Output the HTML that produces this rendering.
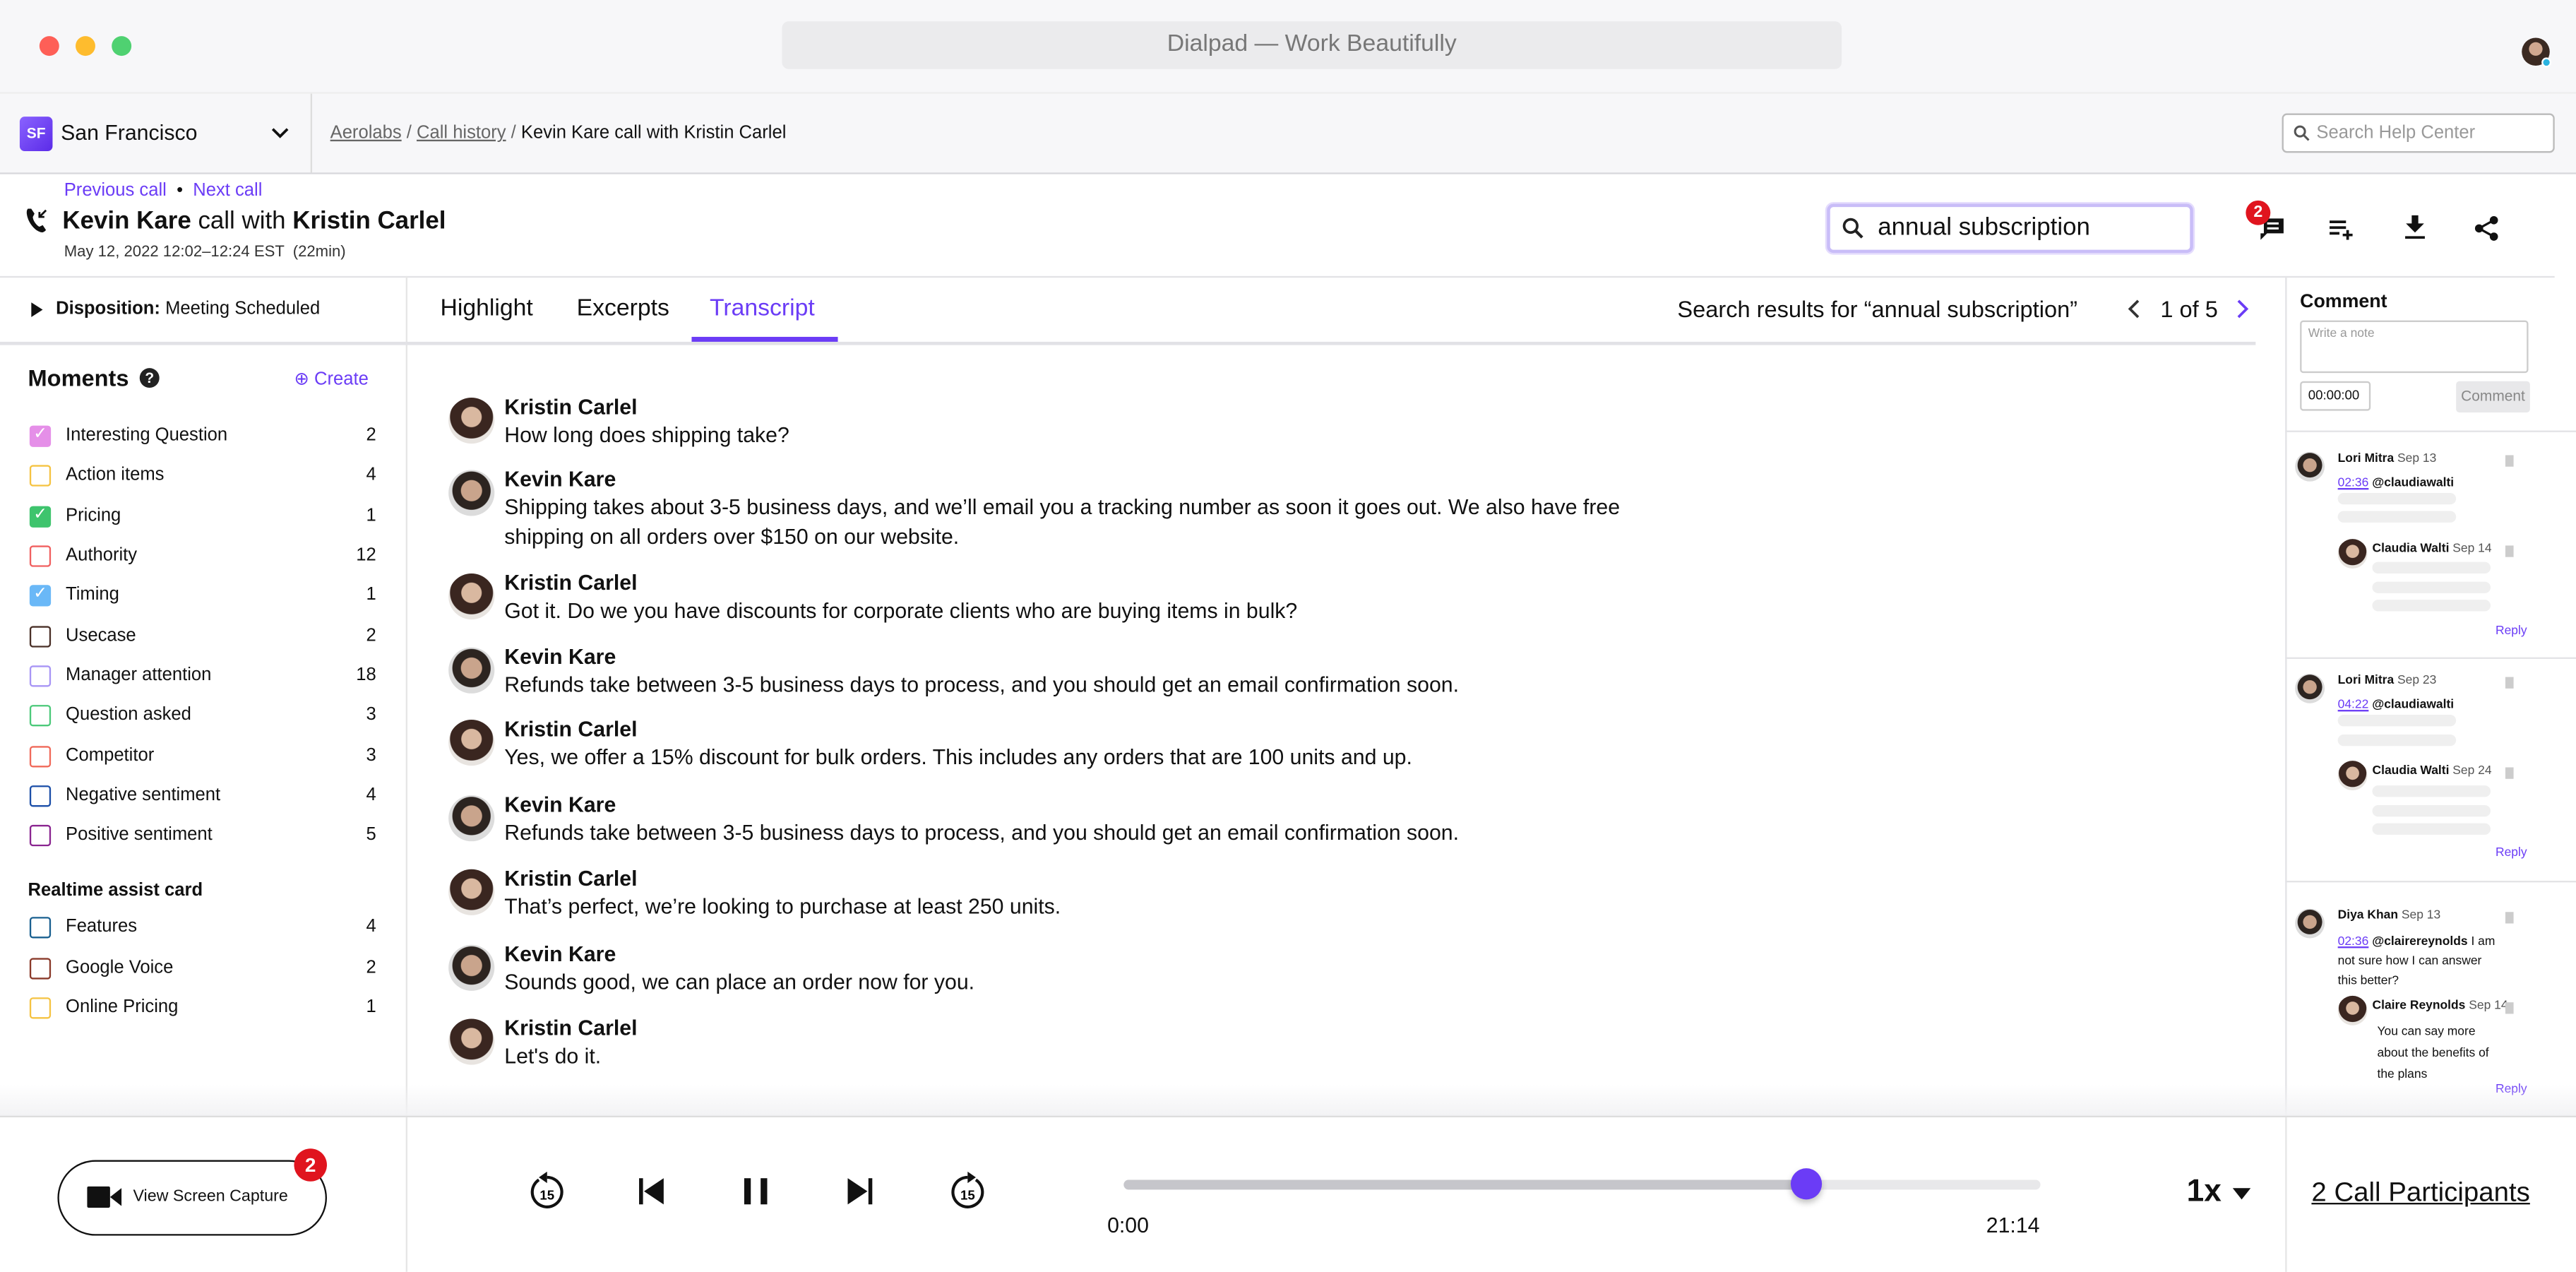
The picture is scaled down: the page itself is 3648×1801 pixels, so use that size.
<!DOCTYPE html>
<html><head><meta charset="utf-8"><style>
*{box-sizing:border-box;margin:0;padding:0}
html,body{width:3648px;height:1800px;overflow:hidden;background:#fff}
#s{position:absolute;left:0;top:0;width:1568px;height:774px;transform:scale(2.32653);transform-origin:0 0;font-family:"Liberation Sans",sans-serif;color:#111;background:#fff}
.a{position:absolute;white-space:nowrap}
.p{color:#6b3cf6}
.chk{position:absolute;left:18px;width:13px;height:13px;border:1.5px solid;border-radius:2px;color:#fff;font-size:10px;line-height:10px;text-align:center}
.mi{position:absolute;left:40px;font-size:11px}
.mn{position:absolute;left:189px;width:40px;font-size:11px;text-align:right}
.av{position:absolute;width:28px;height:28px;border-radius:50%}
.f{background:radial-gradient(circle at 50% 42%,#d9b8a0 0 28%,#3a2620 30% 60%,#e8e4e0 62%)}
.m{background:radial-gradient(circle at 50% 45%,#c9a48c 0 30%,#2c2420 32% 55%,#dcdcdc 57%)}
.nm{position:absolute;left:307px;font-size:13px;font-weight:bold}
.tx{position:absolute;left:307px;font-size:13px;line-height:17.5px}
.sk{position:absolute;height:7px;border-radius:4px;background:#efefef}
.cs{font-size:7.5px}
</style></head><body><div id="s">
<div class="a" style="left:0;top:0;width:1568px;height:105px;background:#f7f7f9"></div>
<div class="a" style="left:24px;top:22px;width:12px;height:12px;border-radius:50%;background:#fe5f57"></div>
<div class="a" style="left:46px;top:22px;width:12px;height:12px;border-radius:50%;background:#febc2e"></div>
<div class="a" style="left:68px;top:22px;width:12px;height:12px;border-radius:50%;background:#4fd171"></div>
<div class="a" style="left:476px;top:13px;width:645px;height:29px;border-radius:4px;background:#ebebed;text-align:center;line-height:29px;font-size:14.5px;color:#777">Dialpad — Work Beautifully</div>
<div class="a" style="left:1535px;top:23px;width:17px;height:17px;border-radius:50%;background:radial-gradient(circle at 50% 40%,#d0a890 0 30%,#3b2a22 32%)"></div>
<div class="a" style="left:1547px;top:35px;width:6px;height:6px;border-radius:50%;background:#2bb3e0;border:1px solid #fff"></div>
<div class="a" style="left:0;top:56px;width:1568px;height:1px;background:#eee"></div>
<div class="a" style="left:12px;top:71px;width:20px;height:21px;border-radius:3px;background:linear-gradient(135deg,#8a63ff,#5b2be8);color:#fff;font-size:9px;font-weight:bold;text-align:center;line-height:21px">SF</div>
<div class="a" style="left:37px;top:73px;font-size:13px">San Francisco</div>
<svg class="a" style="left:165px;top:77px" width="11" height="8" viewBox="0 0 11 8"><path d="M1 1.5l4.5 4.5 4.5-4.5" stroke="#111" stroke-width="1.6" fill="none"/></svg>
<div class="a" style="left:189px;top:57px;width:1px;height:48px;background:#ddd"></div>
<div class="a" style="left:201px;top:75px;font-size:11px;color:#666"><u>Aerolabs</u> / <u>Call history</u> / <span style="color:#111">Kevin Kare call with Kristin Carlel</span></div>
<div class="a" style="left:1389px;top:69px;width:166px;height:24px;border:1px solid #bbb;border-radius:3px;background:#fff"></div>
<svg class="a" style="left:1396px;top:76px" width="10" height="10" viewBox="0 0 10 10"><circle cx="4" cy="4" r="3" stroke="#555" stroke-width="1.3" fill="none"/><path d="M6.3 6.3l3 3" stroke="#555" stroke-width="1.3"/></svg>
<div class="a" style="left:1410px;top:75px;font-size:11px;color:#999">Search Help Center</div>
<div class="a" style="left:0;top:105px;width:1568px;height:1px;background:#d8d8dc"></div>
<div class="a p" style="left:39px;top:110px;font-size:11px">Previous call &nbsp;<span style="color:#111">•</span>&nbsp; Next call</div>
<svg class="a" style="left:15px;top:126px" width="15" height="16" viewBox="0 0 15 16"><path d="M2 1c-1 1-1 3 0 6s4 7 7 8c2 1 3 0 4-1l-2-3-2 1c-2-1-4-4-4-6l1-2-2-3z" fill="#111"/><path d="M13 2l-4 4M9 3v3h3" stroke="#111" stroke-width="1.2" fill="none"/></svg>
<div class="a" style="left:38px;top:126px;font-size:15px"><b>Kevin Kare</b> call with <b>Kristin Carlel</b></div>
<div class="a" style="left:39px;top:148px;font-size:9.5px;color:#333">May 12, 2022 12:02–12:24 EST &nbsp;(22min)</div>
<div class="a" style="left:1112px;top:124px;width:223px;height:30px;border:2px solid #c9bdf8;border-radius:4px;box-shadow:0 0 0 1px #e4dcfd"></div>
<svg class="a" style="left:1121px;top:132px" width="14" height="14" viewBox="0 0 14 14"><circle cx="5.5" cy="5.5" r="4" stroke="#222" stroke-width="1.6" fill="none"/><path d="M8.5 8.5l4 4" stroke="#222" stroke-width="1.8"/></svg>
<div class="a" style="left:1143px;top:130px;font-size:15px">annual subscription</div>
<svg class="a" style="left:1374px;top:130px" width="18" height="18" viewBox="0 0 18 18"><path d="M4 3h12v9H6l-4 4V12H4z" fill="#111"/><path d="M6 6h7M6 9h7" stroke="#fff" stroke-width="1.3"/></svg>
<div class="a" style="left:1367px;top:122px;width:15px;height:15px;border-radius:50%;background:#e0141e;color:#fff;font-size:10px;font-weight:bold;text-align:center;line-height:15px">2</div>
<svg class="a" style="left:1418px;top:132px" width="17" height="14" viewBox="0 0 17 14"><path d="M0 3h10M0 6.5h10M0 10h6M11 8v6M8 11h6" stroke="#111" stroke-width="1.6"/></svg>
<svg class="a" style="left:1464px;top:131px" width="12" height="15" viewBox="0 0 12 15"><path d="M4 0h4v5h3.5L6 10.5.5 5H4z" fill="#111"/><path d="M0 13.5h12" stroke="#111" stroke-width="1.6"/></svg>
<svg class="a" style="left:1506px;top:131px" width="15" height="16" viewBox="0 0 15 16"><circle cx="12" cy="3" r="2.5" fill="#111"/><circle cx="3" cy="8" r="2.5" fill="#111"/><circle cx="12" cy="13" r="2.5" fill="#111"/><path d="M12 3L3 8l9 5" stroke="#111" stroke-width="1.4" fill="none"/></svg>
<div class="a" style="left:0;top:168px;width:1555px;height:1px;background:#e3e3e6"></div>
<div class="a" style="left:247px;top:168px;width:1px;height:512px;background:#e6e6e6"></div>
<svg class="a" style="left:19px;top:184px" width="7" height="9" viewBox="0 0 7 9"><path d="M0 0l7 4.5L0 9z" fill="#111"/></svg>
<div class="a" style="left:34px;top:182px;font-size:11px"><b>Disposition:</b> Meeting Scheduled</div>
<div class="a" style="left:0;top:208px;width:1373px;height:2px;background:#e2e2e6"></div>
<div class="a" style="left:17px;top:222px;font-size:14px;font-weight:bold">Moments</div>
<div class="a" style="left:85px;top:224px;width:12px;height:12px;border-radius:50%;background:#222;color:#fff;font-size:9px;font-weight:bold;text-align:center;line-height:12px">?</div>
<div class="a p" style="left:179px;top:224px;font-size:11px">⊕ Create</div>
<div class="chk" style="top:259px;border-color:#e58fe8;background:#e58fe8">✓</div>
<div class="mi" style="top:259px">Interesting Question</div><div class="mn" style="top:259px">2</div>
<div class="chk" style="top:283px;border-color:#f5c342"></div><div class="mi" style="top:283px">Action items</div><div class="mn" style="top:283px">4</div>
<div class="chk" style="top:308px;border-color:#3ec46d;background:#3ec46d">✓</div><div class="mi" style="top:308px">Pricing</div><div class="mn" style="top:308px">1</div>
<div class="chk" style="top:332px;border-color:#f06060"></div><div class="mi" style="top:332px">Authority</div><div class="mn" style="top:332px">12</div>
<div class="chk" style="top:356px;border-color:#6ab8f7;background:#6ab8f7">✓</div><div class="mi" style="top:356px">Timing</div><div class="mn" style="top:356px">1</div>
<div class="chk" style="top:381px;border-color:#4a3028"></div><div class="mi" style="top:381px">Usecase</div><div class="mn" style="top:381px">2</div>
<div class="chk" style="top:405px;border-color:#a895f5"></div><div class="mi" style="top:405px">Manager attention</div><div class="mn" style="top:405px">18</div>
<div class="chk" style="top:429px;border-color:#4cc97a"></div><div class="mi" style="top:429px">Question asked</div><div class="mn" style="top:429px">3</div>
<div class="chk" style="top:454px;border-color:#f06a5a"></div><div class="mi" style="top:454px">Competitor</div><div class="mn" style="top:454px">3</div>
<div class="chk" style="top:478px;border-color:#1c4fa8"></div><div class="mi" style="top:478px">Negative sentiment</div><div class="mn" style="top:478px">4</div>
<div class="chk" style="top:502px;border-color:#8a2590"></div><div class="mi" style="top:502px">Positive sentiment</div><div class="mn" style="top:502px">5</div>
<div class="a" style="left:17px;top:536px;font-size:11px;font-weight:bold">Realtime assist card</div>
<div class="chk" style="top:558px;border-color:#1a6090"></div><div class="mi" style="top:558px">Features</div><div class="mn" style="top:558px">4</div>
<div class="chk" style="top:583px;border-color:#8a3a2a"></div><div class="mi" style="top:583px">Google Voice</div><div class="mn" style="top:583px">2</div>
<div class="chk" style="top:607px;border-color:#f5c342"></div><div class="mi" style="top:607px">Online Pricing</div><div class="mn" style="top:607px">1</div>
<div class="a" style="left:268px;top:180px;font-size:14.5px">Highlight</div>
<div class="a" style="left:351px;top:180px;font-size:14.5px">Excerpts</div>
<div class="a p" style="left:432px;top:180px;font-size:14.5px">Transcript</div>
<div class="a" style="left:421px;top:205px;width:89px;height:3px;background:#6b3cf6"></div>
<div class="a" style="left:1021px;top:180px;font-size:14px">Search results for “annual subscription”</div>
<svg class="a" style="left:1295px;top:182px" width="8" height="12" viewBox="0 0 8 12"><path d="M6.5 1L1.5 6l5 5" stroke="#333" stroke-width="1.6" fill="none"/></svg>
<div class="a" style="left:1315px;top:180px;font-size:14px">1 of 5</div>
<svg class="a" style="left:1361px;top:182px" width="8" height="12" viewBox="0 0 8 12"><path d="M1.5 1l5 5-5 5" stroke="#6b3cf6" stroke-width="1.6" fill="none"/></svg>
<div class="av f" style="left:273px;top:242px"></div><div class="nm" style="top:240px">Kristin Carlel</div><div class="tx" style="top:256px">How long does shipping take?</div>
<div class="av m" style="left:273px;top:286px"></div><div class="nm" style="top:284px">Kevin Kare</div><div class="tx" style="top:300px">Shipping takes about 3-5 business days, and we’ll email you a tracking number as soon it goes out. We also have free<br>shipping on all orders over $150 on our website.</div>
<div class="av f" style="left:273px;top:349px"></div><div class="nm" style="top:347px">Kristin Carlel</div><div class="tx" style="top:363px">Got it. Do we you have discounts for corporate clients who are buying items in bulk?</div>
<div class="av m" style="left:273px;top:394px"></div><div class="nm" style="top:392px">Kevin Kare</div><div class="tx" style="top:408px">Refunds take between 3-5 business days to process, and you should get an email confirmation soon.</div>
<div class="av f" style="left:273px;top:438px"></div><div class="nm" style="top:436px">Kristin Carlel</div><div class="tx" style="top:452px">Yes, we offer a 15% discount for bulk orders. This includes any orders that are 100 units and up.</div>
<div class="av m" style="left:273px;top:484px"></div><div class="nm" style="top:482px">Kevin Kare</div><div class="tx" style="top:498px">Refunds take between 3-5 business days to process, and you should get an email confirmation soon.</div>
<div class="av f" style="left:273px;top:529px"></div><div class="nm" style="top:527px">Kristin Carlel</div><div class="tx" style="top:543px">That’s perfect, we’re looking to purchase at least 250 units.</div>
<div class="av m" style="left:273px;top:575px"></div><div class="nm" style="top:573px">Kevin Kare</div><div class="tx" style="top:589px">Sounds good, we can place an order now for you.</div>
<div class="av f" style="left:273px;top:620px"></div><div class="nm" style="top:618px">Kristin Carlel</div><div class="tx" style="top:634px">Let's do it.</div>
<div class="a" style="left:1391px;top:168px;width:1px;height:606px;background:#e3e3e6"></div>
<div class="a" style="left:1400px;top:178px;font-size:11.5px;font-weight:bold">Comment</div>
<div class="a" style="left:1400px;top:195px;width:139px;height:32px;border:1px solid #ccc;border-radius:2px"></div>
<div class="a" style="left:1405px;top:198px;font-size:7.5px;color:#999">Write a note</div>
<div class="a" style="left:1400px;top:232px;width:43px;height:18px;border:1px solid #ccc;border-radius:2px;font-size:8px;line-height:16px;padding-left:4px">00:00:00</div>
<div class="a" style="left:1495px;top:232px;width:45px;height:19px;border-radius:2px;background:#e8e8ea;color:#888;font-size:9px;text-align:center;line-height:19px">Comment</div>
<div class="a" style="left:1391px;top:262px;width:177px;height:1px;background:#e3e3e6"></div>
<div class="av m" style="left:1397px;top:275px;width:18px;height:18px"></div>
<div class="a cs" style="left:1423px;top:274px"><b>Lori Mitra</b> <span style="color:#555">Sep 13</span></div>
<div class="a" style="left:1525px;top:277px;width:5px;height:7px;background:#ccc"></div>
<div class="a cs" style="left:1423px;top:289px"><u class="p">02:36</u> <b>@claudiawalti</b></div>
<div class="sk" style="left:1423px;top:300px;width:72px"></div><div class="sk" style="left:1423px;top:311px;width:72px"></div>
<div class="av f" style="left:1423px;top:328px;width:18px;height:18px"></div>
<div class="a cs" style="left:1444px;top:329px"><b>Claudia Walti</b> <span style="color:#555">Sep 14</span></div>
<div class="a" style="left:1525px;top:332px;width:5px;height:7px;background:#ccc"></div>
<div class="sk" style="left:1444px;top:342px;width:72px"></div><div class="sk" style="left:1444px;top:354px;width:72px"></div><div class="sk" style="left:1444px;top:365px;width:72px"></div>
<div class="a p cs" style="left:1519px;top:379px">Reply</div>
<div class="a" style="left:1391px;top:400px;width:177px;height:1px;background:#e3e3e6"></div>
<div class="av m" style="left:1397px;top:410px;width:18px;height:18px"></div>
<div class="a cs" style="left:1423px;top:409px"><b>Lori Mitra</b> <span style="color:#555">Sep 23</span></div>
<div class="a" style="left:1525px;top:412px;width:5px;height:7px;background:#ccc"></div>
<div class="a cs" style="left:1423px;top:424px"><u class="p">04:22</u> <b>@claudiawalti</b></div>
<div class="sk" style="left:1423px;top:435px;width:72px"></div><div class="sk" style="left:1423px;top:447px;width:72px"></div>
<div class="av f" style="left:1423px;top:463px;width:18px;height:18px"></div>
<div class="a cs" style="left:1444px;top:464px"><b>Claudia Walti</b> <span style="color:#555">Sep 24</span></div>
<div class="a" style="left:1525px;top:467px;width:5px;height:7px;background:#ccc"></div>
<div class="sk" style="left:1444px;top:478px;width:72px"></div><div class="sk" style="left:1444px;top:490px;width:72px"></div><div class="sk" style="left:1444px;top:501px;width:72px"></div>
<div class="a p cs" style="left:1519px;top:514px">Reply</div>
<div class="a" style="left:1391px;top:536px;width:177px;height:1px;background:#e3e3e6"></div>
<div class="av m" style="left:1397px;top:553px;width:18px;height:18px"></div>
<div class="a cs" style="left:1423px;top:552px"><b>Diya Khan</b> <span style="color:#555">Sep 13</span></div>
<div class="a" style="left:1525px;top:555px;width:5px;height:7px;background:#ccc"></div>
<div class="a cs" style="left:1423px;top:567px;line-height:12px"><u class="p">02:36</u> <b>@clairereynolds</b> I am<br>not sure how I can answer<br>this better?</div>
<div class="av f" style="left:1423px;top:606px;width:18px;height:18px"></div>
<div class="a cs" style="left:1444px;top:607px"><b>Claire Reynolds</b> <span style="color:#555">Sep 14</span></div>
<div class="a" style="left:1525px;top:610px;width:5px;height:7px;background:#ccc"></div>
<div class="a cs" style="left:1447px;top:621px;line-height:13px">You can say more<br>about the benefits of<br>the plans</div>
<div class="a p cs" style="left:1519px;top:658px">Reply</div>
<div class="a" style="left:0;top:660px;width:1568px;height:20px;background:linear-gradient(#fff0,#f2f2f4)"></div>
<div class="a" style="left:0;top:679px;width:1568px;height:1px;background:#ddd"></div>
<div class="a" style="left:0;top:680px;width:1568px;height:94px;background:#fff"></div>
<div class="a" style="left:247px;top:680px;width:1px;height:94px;background:#e6e6e6"></div>
<div class="a" style="left:1391px;top:680px;width:1px;height:94px;background:#e6e6e6"></div>
<div class="a" style="left:35px;top:706px;width:164px;height:46px;border:1.5px solid #111;border-radius:23px"></div>
<svg class="a" style="left:53px;top:722px" width="21" height="13" viewBox="0 0 21 13"><rect x="0" y="0" width="14" height="13" rx="1" fill="#111"/><path d="M14 6.5L21 1v11z" fill="#111"/></svg>
<div class="a" style="left:81px;top:723px;font-size:10px">View Screen Capture</div>
<div class="a" style="left:179px;top:699px;width:20px;height:20px;border-radius:50%;background:#e0141e;color:#fff;font-size:12px;font-weight:bold;text-align:center;line-height:20px">2</div>
<svg class="a" style="left:322px;top:713px" width="22" height="24" viewBox="0 0 22 24"><path d="M6 5a9 9 0 1 0 5-1.5" stroke="#111" stroke-width="1.8" fill="none"/><path d="M11 0v7l-5-3.5z" fill="#111"/><text x="11" y="17" font-size="8" font-family="Liberation Sans" text-anchor="middle" font-weight="bold">15</text></svg>
<svg class="a" style="left:389px;top:717px" width="15" height="16" viewBox="0 0 15 16"><rect x="0" y="0" width="2.4" height="16" fill="#111"/><path d="M15 0v16L3 8z" fill="#111"/></svg>
<svg class="a" style="left:452px;top:717px" width="16" height="16" viewBox="0 0 16 16"><rect x="1" y="0" width="4" height="16" fill="#111"/><rect x="11" y="0" width="4" height="16" fill="#111"/></svg>
<svg class="a" style="left:516px;top:717px" width="15" height="16" viewBox="0 0 15 16"><path d="M0 0v16L12 8z" fill="#111"/><rect x="12.6" y="0" width="2.4" height="16" fill="#111"/></svg>
<svg class="a" style="left:578px;top:713px" width="22" height="24" viewBox="0 0 22 24"><path d="M16 5a9 9 0 1 1-5-1.5" stroke="#111" stroke-width="1.8" fill="none"/><path d="M11 0v7l5-3.5z" fill="#111"/><text x="11" y="17" font-size="8" font-family="Liberation Sans" text-anchor="middle" font-weight="bold">15</text></svg>
<div class="a" style="left:684px;top:718px;width:558px;height:6px;border-radius:3px;background:#e8e8ea"></div>
<div class="a" style="left:684px;top:718px;width:416px;height:6px;border-radius:3px;background:#c6c6cb"></div>
<div class="a" style="left:1090px;top:711px;width:19px;height:19px;border-radius:50%;background:#6b3cf6;box-shadow:0 2px 4px rgba(0,0,0,.25)"></div>
<div class="a" style="left:674px;top:738px;font-size:13px">0:00</div>
<div class="a" style="left:1209px;top:738px;font-size:13px">21:14</div>
<div class="a" style="left:1331px;top:715px;font-size:19px;font-weight:bold">1x</div>
<svg class="a" style="left:1359px;top:723px" width="11" height="7" viewBox="0 0 11 7"><path d="M0 0h11L5.5 7z" fill="#111"/></svg>
<div class="a" style="left:1407px;top:717px;font-size:16.5px;text-decoration:underline">2 Call Participants</div>
</div></body></html>
